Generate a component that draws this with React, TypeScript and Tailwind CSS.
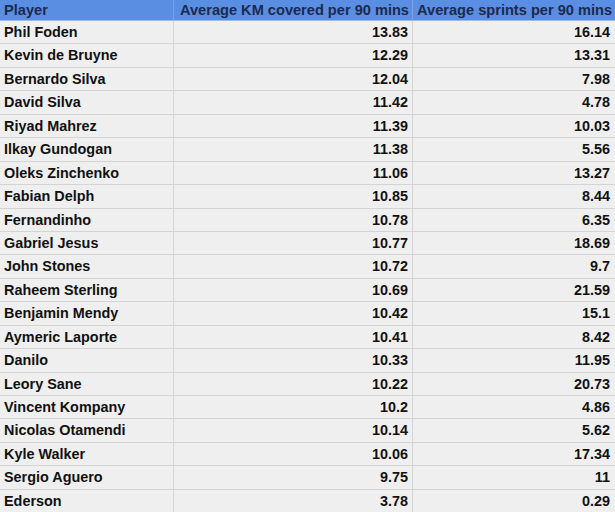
const rows: [string, string, string][] = [
	['Phil Foden', '13.83', '16.14'],
	['Kevin de Bruyne', '12.29', '13.31'],
	['Bernardo Silva', '12.04', '7.98'],
	['David Silva', '11.42', '4.78'],
	['Riyad Mahrez', '11.39', '10.03'],
	['Ilkay Gundogan', '11.38', '5.56'],
	['Oleks Zinchenko', '11.06', '13.27'],
	['Fabian Delph', '10.85', '8.44'],
	['Fernandinho', '10.78', '6.35'],
	['Gabriel Jesus', '10.77', '18.69'],
	['John Stones', '10.72', '9.7'],
	['Raheem Sterling', '10.69', '21.59'],
	['Benjamin Mendy', '10.42', '15.1'],
	['Aymeric Laporte', '10.41', '8.42'],
	['Danilo', '10.33', '11.95'],
	['Leory Sane', '10.22', '20.73'],
	['Vincent Kompany', '10.2', '4.86'],
	['Nicolas Otamendi', '10.14', '5.62'],
	['Kyle Walker', '10.06', '17.34'],
	['Sergio Aguero', '9.75', '11'],
	['Ederson', '3.78', '0.29'],
]

const App = () => {
	return (
		<div className="w-[615px] h-[512px] overflow-hidden bg-[#efefef] font-['Liberation_Sans',Arial,sans-serif] font-bold text-[14.4px] text-[#111111]">
			<div className="grid grid-cols-[174px_239px_1fr] h-[21px] bg-[#5a8ee3] text-[#1b2a4e] border-b border-[#9fb9e6] text-[14.6px] whitespace-nowrap">
				<div className="px-[4px] leading-[20px] border-r border-[#7fa3e0]">Player</div>
				<div className="px-[3px] leading-[20px] border-r border-[#7fa3e0] text-right">Average KM covered per 90 mins</div>
				<div className="px-[3px] leading-[20px] text-right">Average sprints per 90 mins</div>
			</div>
			{rows.map(([name, km, sprints]) => (
				<div key={name} className="grid grid-cols-[174px_239px_1fr] h-[23.45px] border-b border-[#d4d4d4]">
					<div className="px-[4px] leading-[22.45px] border-r border-[#d4d4d4]">{name}</div>
					<div className="px-[4px] leading-[22.45px] border-r border-[#d4d4d4] text-right">{km}</div>
					<div className="px-[5px] leading-[22.45px] text-right">{sprints}</div>
				</div>
			))}
		</div>
	)
}

export default App
